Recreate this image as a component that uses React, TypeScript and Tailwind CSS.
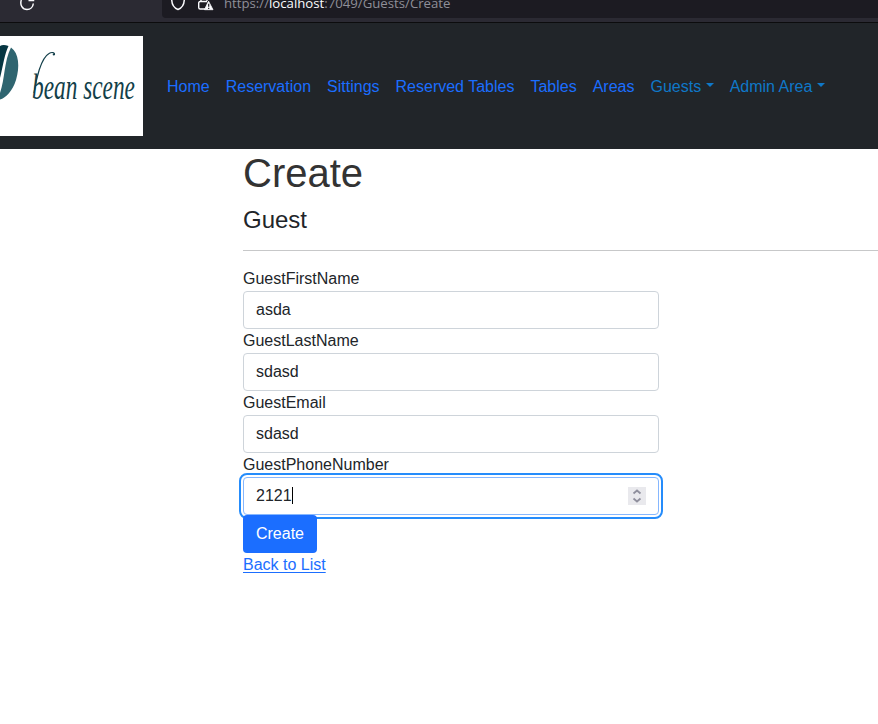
import React from "react";

const links = ["Home", "Reservation", "Sittings", "Reserved Tables", "Tables", "Areas"];
const menus = ["Guests", "Admin Area"];

const fields = [
  { label: "GuestFirstName", value: "asda" },
  { label: "GuestLastName", value: "sdasd" },
  { label: "GuestEmail", value: "sdasd" },
];

function BrowserBar() {
  return (
    <div className="flex h-[23px] overflow-hidden border-b border-[#0c0c0d] bg-[#2b2a33]">
      <div className="w-[162px] shrink-0">
        <svg className="ml-[19px] block" width="16" height="12" viewBox="0 0 16 12" fill="none" stroke="#fbfbfe" strokeWidth="1.5">
          <path d="M2.300 0C0.700 5 3.500 9.500 8 9.500c3.500 0 6-2.500 6.300-6" />
          <path d="M9.500 0.500H14.500V0" />
        </svg>
      </div>
      <div className="flex h-[18px] grow rounded-bl bg-[#1c1b22]">
        <svg className="ml-2 block shrink-0" width="16" height="12" viewBox="0 0 16 12" fill="none" stroke="#fbfbfe" strokeWidth="1.5">
          <path d="M1.700 0C2 5 4.500 8.200 8 9.500 11.500 8.200 14 5 14.300 0" />
        </svg>
        <svg className="ml-[11px] block shrink-0" width="18" height="12" viewBox="0 0 18 12">
          <path d="M4 0v1M10 0v1M8 9H3.200Q1.700 9 1.700 7.500V3Q1.700 1.500 3.200 1.500H10" fill="none" stroke="#fbfbfe" strokeWidth="1.400" />
          <path d="M11.500 1.200 16 9.700H7.500Z" fill="#fbfbfe" stroke="#fbfbfe" strokeWidth="0.800" strokeLinejoin="round" />
          <path d="M11.700 3.700v3M11.700 7.800v1.200" stroke="#1c1b22" strokeWidth="1.200" />
        </svg>
        <div className="-mt-[6px] ml-[9px] h-5 whitespace-nowrap font-['Open_Sans',sans-serif] text-[13.2px] leading-[19px] text-[#8f8f98]">
          https://<span className="text-[#fbfbfe]">localhost</span>:7049/Guests/Create
        </div>
      </div>
    </div>
  );
}

function Logo() {
  return (
    <svg className="block shrink-0 bg-white" width="143" height="100" viewBox="0 0 143 100">
      <path d="M0 10C2 8.700 5 8.700 8.500 10 4.500 18 3 30 0 42Z" fill="#063642" />
      <path d="M11 11.500C19 17 20 31 16 44 12.500 55 6 62 0 63.500V57C5 43 4 25 11 11.500Z" fill="#2f6570" />
      <path d="M34 57C36 43 41 22 49 17.500 52 15.700 55 16.500 54.500 19" fill="none" stroke="#133f4a" strokeWidth="1.200" />
      <circle cx="53.800" cy="18.500" r="1.100" fill="#133f4a" />
      <text transform="translate(32 63) scale(0.648 1)" fill="#133f4a" fontFamily="'Liberation Serif', serif" fontStyle="italic" fontSize="36">
        bean scene
      </text>
    </svg>
  );
}

export default function App() {
  return (
    <div className="h-[724px] overflow-hidden bg-white font-['Liberation_Sans',Arial,sans-serif] text-base text-[#212529]">
      <BrowserBar />
      <nav className="flex h-[126px] items-center bg-[#212529]">
        <Logo />
        <ul className="ml-4 flex pt-0.5">
          {links.map((name) => (
            <li key={name} className="px-2 whitespace-nowrap text-[#1b6eff]">{name}</li>
          ))}
          {menus.map((name) => (
            <li key={name} className="flex items-center px-2 whitespace-nowrap text-[#0f78c8]">
              {name}
              <span className="-mt-1 ml-[4.5px] border-x-[4.8px] border-t-[4.8px] border-x-transparent border-t-current" />
            </li>
          ))}
        </ul>
      </nav>
      <main className="pl-[243px]">
        <h1 className="text-[40px] leading-[48px] text-[#333]">Create</h1>
        <h4 className="mt-2 text-2xl leading-[29px]">Guest</h4>
        <hr className="mt-4 mb-4 border-t border-[#c7c8c9]" />
        <form className="w-[416px]">
          {fields.map(({ label, value }) => (
            <div key={label}>
              <label className="block h-6 leading-6">{label}</label>
              <div className="h-[38px] rounded border border-[#ced4da] px-3 py-[5px] leading-[26px]">{value}</div>
            </div>
          ))}
          <label className="block h-6 leading-6">GuestPhoneNumber</label>
          <div className="flex h-[38px] items-center rounded border border-[#86b7fe] px-3 outline-2 outline-offset-2 outline-[#258cfb]">
            <span>2121</span>
            <span className="mb-px h-[17px] w-px bg-black" />
            <span className="ml-auto flex h-[18px] w-[18px] items-center justify-center bg-[#e9e9ed]">
              <svg width="10" height="14" viewBox="0 0 10 14" fill="none" stroke="#8f8f9d" strokeWidth="1.800">
                <path d="M1.500 4.500 5 1.500l3.500 3M1.500 9.500 5 12.500l3.500-3" />
              </svg>
            </span>
          </div>
          <button type="button" className="relative block h-[38px] w-[74px] rounded bg-[#1b6eff] text-white">Create</button>
        </form>
        <a className="block h-6 w-fit leading-6 text-[#1b6eff] underline decoration-1 underline-offset-[2px]">Back to List</a>
      </main>
    </div>
  );
}
